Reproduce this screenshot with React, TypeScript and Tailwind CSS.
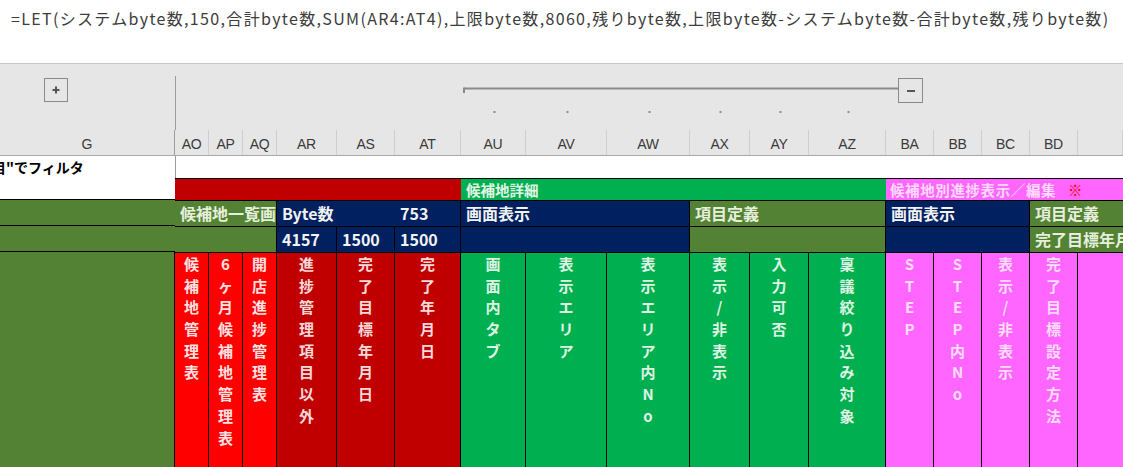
import React from "react";

type Col = { id: string; w: number };

const cols: Col[] = [
  { id: "AO", w: 34 },
  { id: "AP", w: 34 },
  { id: "AQ", w: 34 },
  { id: "AR", w: 60 },
  { id: "AS", w: 58 },
  { id: "AT", w: 66 },
  { id: "AU", w: 65 },
  { id: "AV", w: 81 },
  { id: "AW", w: 83 },
  { id: "AX", w: 60 },
  { id: "AY", w: 59 },
  { id: "AZ", w: 77 },
  { id: "BA", w: 48 },
  { id: "BB", w: 48 },
  { id: "BC", w: 48 },
  { id: "BD", w: 48 },
  { id: "", w: 45 },
];

type V = { text: string; w: number; bg: string; fg: string };

const RED = "bg-[#ff0000]";
const DRED = "bg-[#c00000]";
const GRN = "bg-[#00b050]";
const PNK = "bg-[#ff66ff]";

const vcols: V[] = [
  { text: "候補地管理表", w: 34, bg: RED, fg: "text-[#ffe2e2]" },
  { text: "6ヶ月候補地管理表", w: 34, bg: RED, fg: "text-[#ffe2e2]" },
  { text: "開店進捗管理表", w: 34, bg: RED, fg: "text-[#ffe2e2]" },
  { text: "進捗管理項目以外", w: 60, bg: DRED, fg: "text-[#f6dada]" },
  { text: "完了目標年月日", w: 58, bg: DRED, fg: "text-[#f6dada]" },
  { text: "完了年月日", w: 66, bg: DRED, fg: "text-[#f6dada]" },
  { text: "画面内タブ", w: 65, bg: GRN, fg: "text-[#dff3e4]" },
  { text: "表示エリア", w: 81, bg: GRN, fg: "text-[#dff3e4]" },
  { text: "表示エリア内No", w: 83, bg: GRN, fg: "text-[#dff3e4]" },
  { text: "表示/非表示", w: 60, bg: GRN, fg: "text-[#dff3e4]" },
  { text: "入力可否", w: 59, bg: GRN, fg: "text-[#dff3e4]" },
  { text: "稟議絞り込み対象", w: 77, bg: GRN, fg: "text-[#dff3e4]" },
  { text: "STEP", w: 48, bg: PNK, fg: "text-[#ffdcff]" },
  { text: "STEP内No", w: 48, bg: PNK, fg: "text-[#ffdcff]" },
  { text: "表示/非表示", w: 48, bg: PNK, fg: "text-[#ffdcff]" },
  { text: "完了目標設定方法", w: 48, bg: PNK, fg: "text-[#ffdcff]" },
  { text: "", w: 45, bg: PNK, fg: "text-[#ffdcff]" },
];

const cellFont = { fontFamily: '"Noto Sans CJK JP", "Noto Sans", sans-serif' };

function OutlineBar() {
  return (
    <div className="relative h-[66px] flex">
      <div className="w-[175px] shrink-0 relative">
        <div className="absolute left-[44px] top-[14px] w-[24px] h-[24px] border border-[#8a8a8a] flex items-center justify-center">
          <svg width="10" height="10" viewBox="0 0 10 10">
            <path d="M5 1.5v7M1.5 5h7" stroke="#555" strokeWidth="2" />
          </svg>
        </div>
      </div>
      <div className="flex-1 mt-[12px] border-l border-[#9c9c9c] relative">
        <svg
          className="absolute left-0 top-0"
          width="947"
          height="54"
          viewBox="0 0 947 54"
        >
          <path d="M288 12.5 H723" stroke="#8a8a8a" strokeWidth="2" />
          <path d="M288 11.5 V17" stroke="#8a8a8a" strokeWidth="2" />
          {[317.5, 390.5, 472.5, 543.5, 603.5, 671.5].map((x) => (
            <rect key={x} x={x} y={35} width={2} height={2} fill="#8c8c8c" />
          ))}
        </svg>
        <div className="absolute left-[722px] top-[2px] w-[25px] h-[25px] border border-[#8a8a8a] flex items-center justify-center">
          <div className="w-[8px] h-[2px] bg-[#555]" />
        </div>
      </div>
    </div>
  );
}

function ColHeaders() {
  return (
    <div
      className="flex h-[26px] border-b border-[#a9a9a9]"
      style={{ fontFamily: '"Liberation Sans", Arial, sans-serif' }}
    >
      <div className="w-[175px] shrink-0 border-r border-[#9c9c9c] flex items-center justify-center pt-[3px] text-[14px] text-[#3a3a3a]">
        G
      </div>
      {cols.map((c, i) => (
        <div
          key={i}
          style={{ width: c.w }}
          className="shrink-0 border-r border-[#cfcfcf] flex items-center justify-center pt-[3px] text-[14px] text-[#3a3a3a] tracking-[-0.3px]"
        >
          {c.id}
        </div>
      ))}
    </div>
  );
}

function VText({ text }: { text: string }) {
  return (
    <div className="flex flex-col items-center">
      {Array.from(text).map((ch, i) => (
        <div key={i} className="h-[21.7px] leading-[21.7px] text-[15px] font-bold">
          {ch}
        </div>
      ))}
    </div>
  );
}

export default function App() {
  return (
    <div className="w-[1123px] h-[467px] overflow-hidden bg-[#e6e6e6] flex flex-col">
      {/* formula bar */}
      <div className="h-[64px] shrink-0 bg-white border-b border-[#c8c8c8] pl-[11px] pt-[6px]">
        <div
          className="text-[16px] text-[#3c3c3c] whitespace-nowrap tracking-[1.34px]"
          style={{ fontFamily: '"Noto Sans CJK JP", "Noto Sans", sans-serif' }}
        >
          =LET(システムbyte数,150,合計byte数,SUM(AR4:AT4),上限byte数,8060,残りbyte数,上限byte数-システムbyte数-合計byte数,残りbyte数)
        </div>
      </div>

      <OutlineBar />
      <ColHeaders />

      {/* sheet */}
      <div className="flex flex-1 bg-white" style={cellFont}>
        {/* column G */}
        <div className="w-[175px] shrink-0 flex flex-col">
          <div className="h-[44px] bg-white border-b border-black overflow-hidden whitespace-nowrap">
            <div className="text-[14px] font-bold text-black leading-[22px] -ml-[8px]">
              目"でフィルタ
            </div>
          </div>
          <div className="h-[26px] bg-[#548235] border-b border-black" />
          <div className="h-[26px] bg-[#548235] border-b border-black" />
          <div className="flex-1 bg-[#548235] border-r border-black" />
        </div>

        {/* right part */}
        <div className="flex-1 flex flex-col min-w-0">
          {/* row 1 */}
          <div className="h-[22px] bg-white border-l border-[#9c9c9c]" />
          {/* row 2 */}
          <div className="h-[22px] flex border-t border-black text-[14.5px] font-bold leading-[21px] whitespace-nowrap">
            <div className="w-[286px] shrink-0 bg-[#c00000]" />
            <div className="w-[425px] shrink-0 bg-[#00b050] text-[#e2f4e6] pl-[5px]">候補地詳細</div>
            <div className="flex-1 bg-[#ff66ff] text-[#ffd9ff] pl-[4px] overflow-hidden">
              <span className="tracking-[0.6px]">候補地別進捗表示／編集</span>
              <span className="text-[#ff0000] ml-[12px]">※</span>
            </div>
          </div>
          {/* row 3 */}
          <div className="h-[26px] flex border-t border-black text-[16px] font-bold leading-[25px] whitespace-nowrap">
            <div className="w-[102px] shrink-0 bg-[#548235] text-[#e6efdc] pl-[5px] overflow-hidden border-r border-black">
              <div className="w-[96px] overflow-hidden">候補地一覧画面</div>
            </div>
            <div className="w-[118px] shrink-0 bg-[#002060] text-[#f2f2f2] pl-[5px]">Byte数</div>
            <div className="w-[66px] shrink-0 bg-[#002060] text-[#f2f2f2] pl-[5px] border-r border-black">753</div>
            <div className="w-[229px] shrink-0 bg-[#002060] text-[#f2f2f2] pl-[5px] border-r border-black">画面表示</div>
            <div className="w-[196px] shrink-0 bg-[#548235] text-[#e6efdc] pl-[5px] border-r border-black">項目定義</div>
            <div className="w-[144px] shrink-0 bg-[#002060] text-[#f2f2f2] pl-[5px] border-r border-black">画面表示</div>
            <div className="flex-1 bg-[#548235] text-[#e6efdc] pl-[5px] overflow-hidden">項目定義</div>
          </div>
          {/* row 4 */}
          <div className="h-[26px] flex border-t border-black text-[16px] font-bold leading-[25px] whitespace-nowrap">
            <div className="w-[102px] shrink-0 bg-[#548235] border-r border-black" />
            <div className="w-[60px] shrink-0 bg-[#002060] text-[#f2f2f2] pl-[5px] border-r border-black">4157</div>
            <div className="w-[58px] shrink-0 bg-[#002060] text-[#f2f2f2] pl-[5px] border-r border-black">1500</div>
            <div className="w-[66px] shrink-0 bg-[#002060] text-[#f2f2f2] pl-[5px] border-r border-black">1500</div>
            <div className="w-[229px] shrink-0 bg-[#002060] border-r border-black" />
            <div className="w-[196px] shrink-0 bg-[#548235] border-r border-black" />
            <div className="w-[144px] shrink-0 bg-[#002060] border-r border-black" />
            <div className="flex-1 bg-[#548235] text-[#e6efdc] pl-[5px] overflow-hidden">完了目標年月日</div>
          </div>
          {/* row 5 */}
          <div className="flex-1 flex border-t border-black">
            {vcols.map((v, i) => (
              <div
                key={i}
                style={{ width: v.w }}
                className={`shrink-0 ${v.bg} ${v.fg} ${i < vcols.length - 1 ? "border-r border-black" : ""}`}
              >
                <VText text={v.text} />
              </div>
            ))}
          </div>
        </div>
      </div>
    </div>
  );
}
